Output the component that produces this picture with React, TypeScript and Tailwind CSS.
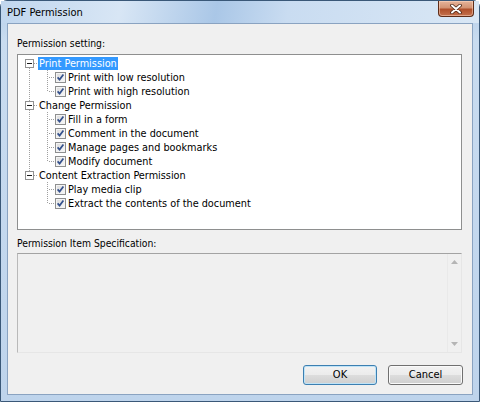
import React from 'react';

interface Group {
  label: string;
  children: string[];
}

const groups: Group[] = [
  { label: 'Print Permission', children: ['Print with low resolution', 'Print with high resolution'] },
  {
    label: 'Change Permission',
    children: ['Fill in a form', 'Comment in the document', 'Manage pages and bookmarks', 'Modify document'],
  },
  { label: 'Content Extraction Permission', children: ['Play media clip', 'Extract the contents of the document'] },
];

const DOT = '#a0a0a0';

const Checkbox: React.FC = () => (
  <svg width="11" height="11" viewBox="0 0 11 11" className="shrink-0">
    <defs>
      <linearGradient id="cbfill" x1="0" y1="0" x2="1" y2="1">
        <stop offset="0" stopColor="#d8d8d8" />
        <stop offset="1" stopColor="#fbfbfb" />
      </linearGradient>
    </defs>
    <rect x="0.5" y="0.5" width="10" height="10" fill="url(#cbfill)" stroke="#8e8f8f" />
    <rect x="1.5" y="1.5" width="8" height="8" fill="none" stroke="#f4f4f4" />
    <path d="M2.6 5.4 L4.6 7.6 L8.4 2.6" fill="none" stroke="#33508c" strokeWidth="1.7" />
  </svg>
);

const RootRow: React.FC<{ label: string; first: boolean; last: boolean; selected?: boolean }> = ({
  label,
  first,
  last,
  selected,
}) => (
  <div className="flex h-[14px] items-center">
    <svg width="18" height="14" viewBox="0 0 18 14" className="shrink-0">
      {!first && <line x1="9.5" y1="0" x2="9.5" y2="3" stroke={DOT} strokeDasharray="1 1" />}
      {!last && <line x1="9.5" y1="12" x2="9.5" y2="14" stroke={DOT} strokeDasharray="1 1" />}
      <line x1="14" y1="7.5" x2="18" y2="7.5" stroke={DOT} strokeDasharray="1 1" />
      <rect x="5.5" y="3.5" width="8" height="8" fill="#fff" stroke="#919191" />
      <line x1="7" y1="7.5" x2="12" y2="7.5" stroke="#1a1a1a" />
    </svg>
    <span
      className={
        selected
          ? 'h-[13px] bg-[#3399ff] px-[1px] leading-[13px] text-white'
          : 'h-[13px] px-[1px] leading-[13px]'
      }
    >
      {label}
    </span>
  </div>
);

const ChildRow: React.FC<{ label: string; parentLast: boolean; last: boolean }> = ({ label, parentLast, last }) => (
  <div className="flex h-[14px] items-center">
    <svg width="18" height="14" viewBox="0 0 18 14" className="shrink-0">
      {!parentLast && <line x1="9.5" y1="0" x2="9.5" y2="14" stroke={DOT} strokeDasharray="1 1" />}
    </svg>
    <svg width="17" height="14" viewBox="0 0 17 14" className="shrink-0">
      <line x1="9.5" y1="0" x2="9.5" y2={last ? 8 : 14} stroke={DOT} strokeDasharray="1 1" />
      <line x1="11" y1="7.5" x2="17" y2="7.5" stroke={DOT} strokeDasharray="1 1" />
    </svg>
    <Checkbox />
    <span className="ml-[1px] h-[13px] px-[1px] leading-[13px]">{label}</span>
  </div>
);

const PdfPermission: React.FC = () => {
  return (
    <div className="flex h-[402px] w-[480px] flex-col rounded-t-[7px] border border-[#3a5878] bg-[linear-gradient(to_bottom,#b4cde8,#c9dcf0_40px,#bed4ec)] font-['DejaVu_Sans_Condensed','Liberation_Sans',sans-serif] text-[10.3px] text-black">
      {/* title bar */}
      <div className="flex h-[22px] shrink-0 items-start bg-[linear-gradient(100deg,#c0d6ee_0%,#d8e6f5_25%,#aac7e7_45%,#c9dcf1_60%,#d9e7f5_100%)]">
        <span className="pl-[6px] pt-[5px] text-[11px] leading-[14px]">PDF Permission</span>
        <div className="mr-[5px] ml-auto flex h-[16px] w-[36px] items-center justify-center rounded-b-[4px] border border-t-0 border-[#5e2c18] bg-[linear-gradient(to_bottom,#e6b49a_0%,#d39373_45%,#b0502b_55%,#c4714d_100%)] shadow-[inset_0_0_0_1px_rgba(255,220,200,0.5)]">
          <svg width="12" height="10" viewBox="0 0 12 10">
            <path d="M2 1.5 L10 8.5 M10 1.5 L2 8.5" stroke="#4a2414" strokeWidth="3.6" strokeLinecap="round" />
            <path d="M2 1.5 L10 8.5 M10 1.5 L2 8.5" stroke="#ffffff" strokeWidth="2" strokeLinecap="round" />
          </svg>
        </div>
      </div>

      {/* client area */}
      <div className="mx-[6px] mb-[6px] flex flex-1 flex-col border border-[#8aa3c1] bg-[#f0f0f0] pl-[9px] pr-[10px] pt-[12px]">
        <div className="h-[14px] leading-[14px]">Permission setting:</div>

        <div className="mt-[4px] h-[176px] border border-[#8e8f8f] bg-white pl-[2px] pt-[1px] text-[10.8px]">
          {groups.map((g, gi) => (
            <React.Fragment key={g.label}>
              <RootRow label={g.label} first={gi === 0} last={gi === groups.length - 1} selected={gi === 0} />
              {g.children.map((c, ci) => (
                <ChildRow
                  key={c}
                  label={c}
                  parentLast={gi === groups.length - 1}
                  last={ci === g.children.length - 1}
                />
              ))}
            </React.Fragment>
          ))}
        </div>

        <div className="mt-[6px] h-[14px] leading-[14px]">Permission Item Specification:</div>

        <div className="mt-[3px] flex h-[100px] border border-t-[#a3a3a3] border-l-[#b9b9b9] border-r-[#e6e6e6] border-b-[#e6e6e6] bg-[#f0f0f0]">
          <div className="flex-1" />
          <div className="flex w-[14px] flex-col items-center justify-between border-l border-[#e9e9e9] py-[6px]">
            <svg width="7" height="4" viewBox="0 0 7 4">
              <path d="M0 4 L3.5 0 L7 4 Z" fill="#b5b5b5" />
            </svg>
            <svg width="7" height="4" viewBox="0 0 7 4">
              <path d="M0 0 L7 0 L3.5 4 Z" fill="#b5b5b5" />
            </svg>
          </div>
        </div>

        <div className="mt-[12px] mr-[-1px] flex justify-end gap-[11px]">
          <button className="h-[20px] w-[74px] rounded-[3px] border border-[#3c7fb1] bg-[linear-gradient(to_bottom,#f2f2f2_0%,#ebebeb_50%,#dddddd_50%,#cfcfcf_100%)] text-[11px] leading-[18px] shadow-[inset_0_0_0_1px_#bfe3f7]">
            OK
          </button>
          <button className="h-[20px] w-[75px] rounded-[3px] border border-[#707070] bg-[linear-gradient(to_bottom,#f2f2f2_0%,#ebebeb_50%,#dddddd_50%,#cfcfcf_100%)] text-[11px] leading-[18px] shadow-[inset_0_0_0_1px_#fafafa]">
            Cancel
          </button>
        </div>
      </div>
    </div>
  );
};

export default PdfPermission;
